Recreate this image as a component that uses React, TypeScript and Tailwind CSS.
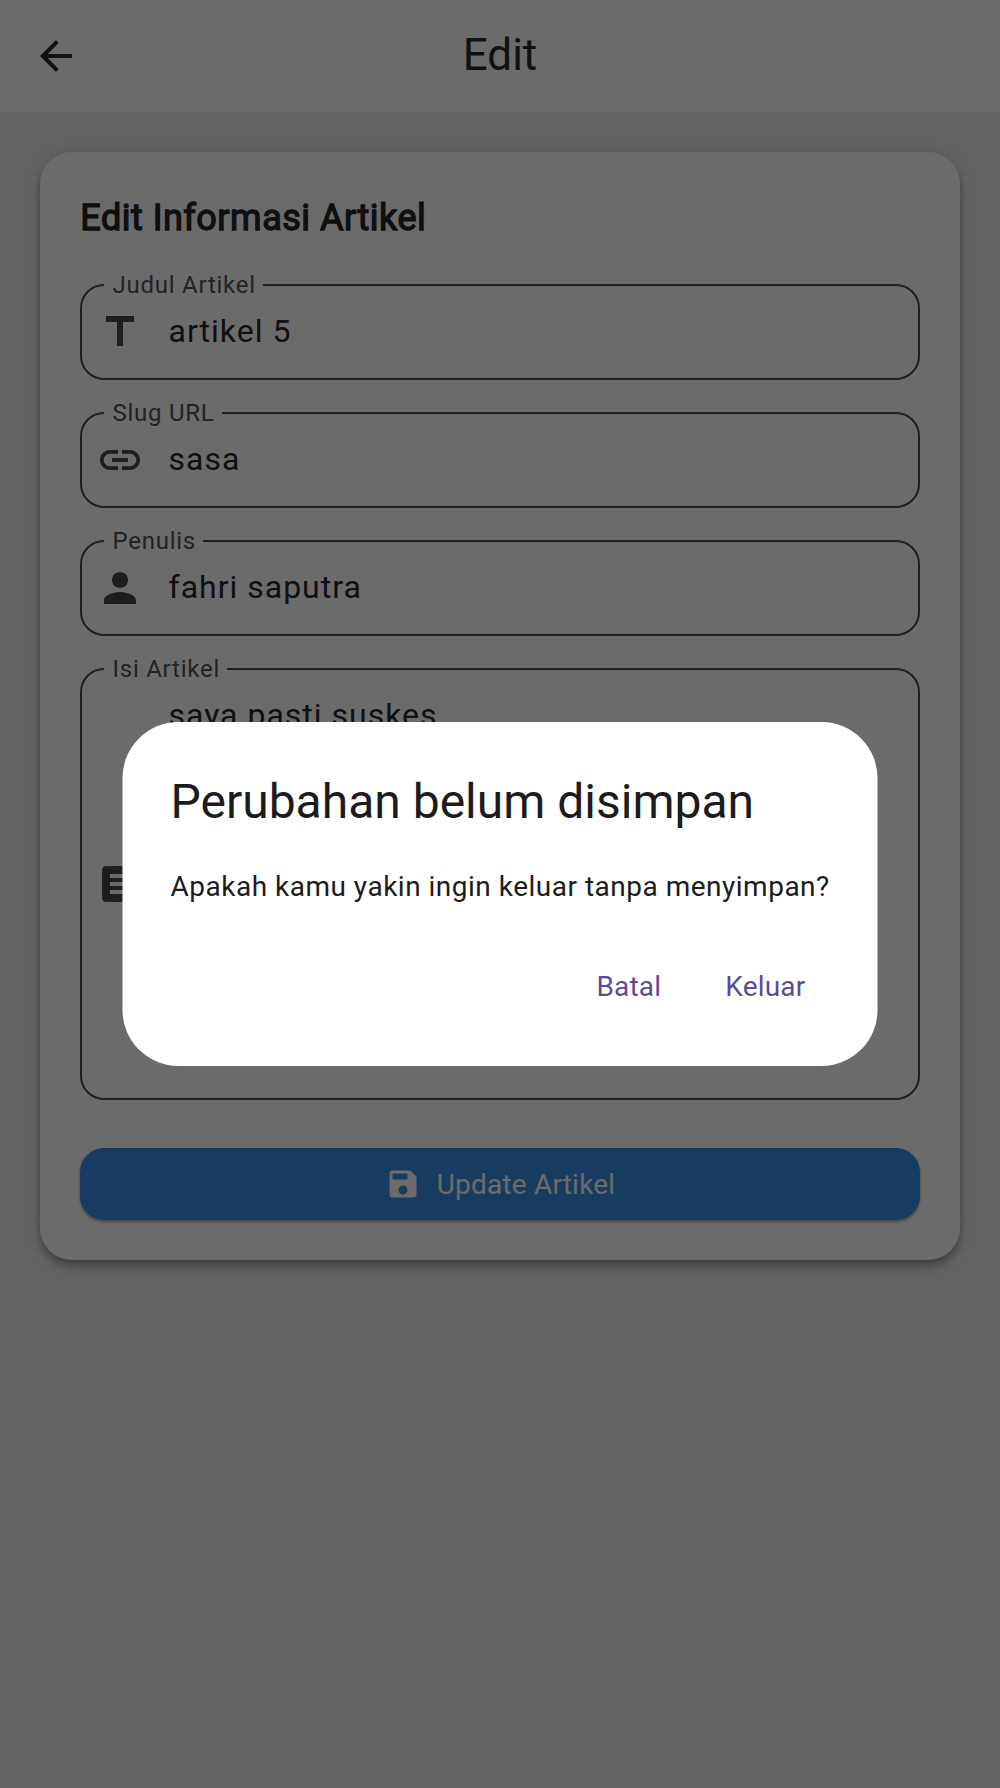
import type { ReactNode } from "react";
import { MdArrowBack, MdArticle, MdLink, MdPerson, MdSave } from "react-icons/md";

type FieldProps = {
  label: string;
  value: string;
  icon: ReactNode;
  tall?: boolean;
};

function TitleIcon() {
  return (
    <svg viewBox="0 0 24 24" width="1em" height="1em" fill="currentColor">
      <path d="M5 4v3h5.5v12h3V7H19V4z" />
    </svg>
  );
}

function Field({ label, value, icon, tall = false }: FieldProps) {
  return (
    <div className={tall ? "relative h-[432px]" : "relative h-24"}>
      <fieldset className="absolute inset-x-0 -top-[13px] bottom-0 rounded-3xl border-2 border-[#49494c]">
        <legend className="ml-[22px] h-7 pr-[7px] pl-[8.5px] text-2xl leading-7 tracking-[0.75px] whitespace-nowrap text-[#515155]">
          {label}
        </legend>
      </fieldset>
      <div className="flex h-full gap-6 px-4">
        <div className="flex items-center text-[48px] text-[#49494c]">{icon}</div>
        <div className="pt-[23px] pl-[0.5px] text-[32px] leading-[48px] tracking-[1px] text-[#262628]">{value}</div>
      </div>
    </div>
  );
}

export default function App() {
  return (
    <div className="relative h-[1788px] w-[1000px] overflow-hidden bg-[#eeeef4] font-[Roboto,sans-serif] text-[#1c1c1e]">
      <header className="grid h-28 grid-cols-[1fr_auto_1fr] items-center bg-white px-8 text-[#2a2a2c]">
        <MdArrowBack className="text-[48px]" />
        <h1 className="pb-0.5 text-[44px] leading-[56px]">Edit</h1>
      </header>

      <main className="mx-10 mt-10 h-[1108px] rounded-[32px] bg-white px-10 pt-[42px] shadow-[0_4px_8px_-2px_rgba(0,0,0,0.26),0_8px_10px_rgba(0,0,0,0.16),0_2px_20px_rgba(0,0,0,0.12)]">
        <h2 className="mb-[42px] pl-[0.25px] text-[36px] leading-[48px] tracking-[0.5px] text-[#242426] [-webkit-text-stroke:1.3px_#242426]">
          Edit Informasi Artikel
        </h2>
        <div className="flex flex-col gap-8">
          <Field label="Judul Artikel" value="artikel 5" icon={<TitleIcon />} />
          <Field label="Slug URL" value="sasa" icon={<MdLink />} />
          <Field label="Penulis" value="fahri saputra" icon={<MdPerson />} />
          <Field label="Isi Artikel" value="saya pasti suskes" icon={<MdArticle />} tall />
        </div>
        <button className="mt-12 flex h-[72px] w-full items-center justify-center gap-4 rounded-3xl bg-[#3a90e2] text-[28px] tracking-[0.2px] text-white shadow-[0_2px_3px_rgba(0,0,0,0.35)]">
          <MdSave className="text-[36px]" />
          <span className="pt-0.5">Update Artikel</span>
        </button>
      </main>

      <div className="absolute inset-0 flex items-center justify-center bg-black/58">
        <section
          role="dialog"
          className="mr-px flex h-[344px] w-[755px] translate-x-[0.5px] flex-col rounded-[56px] bg-white p-12"
        >
          <h2 className="text-[48px] leading-[64px] whitespace-nowrap">Perubahan belum disimpan</h2>
          <p className="mt-[33px] text-[28px] leading-10 tracking-[0.5px] whitespace-nowrap">
            Apakah kamu yakin ingin keluar tanpa menyimpan?
          </p>
          <div className="mt-[47px] flex justify-end gap-4 text-[28px] tracking-[0.2px] text-[#5f4b95]">
            <button className="h-16 px-6 pt-0.5">Batal</button>
            <button className="h-16 px-6 pt-0.5">Keluar</button>
          </div>
        </section>
      </div>
    </div>
  );
}
